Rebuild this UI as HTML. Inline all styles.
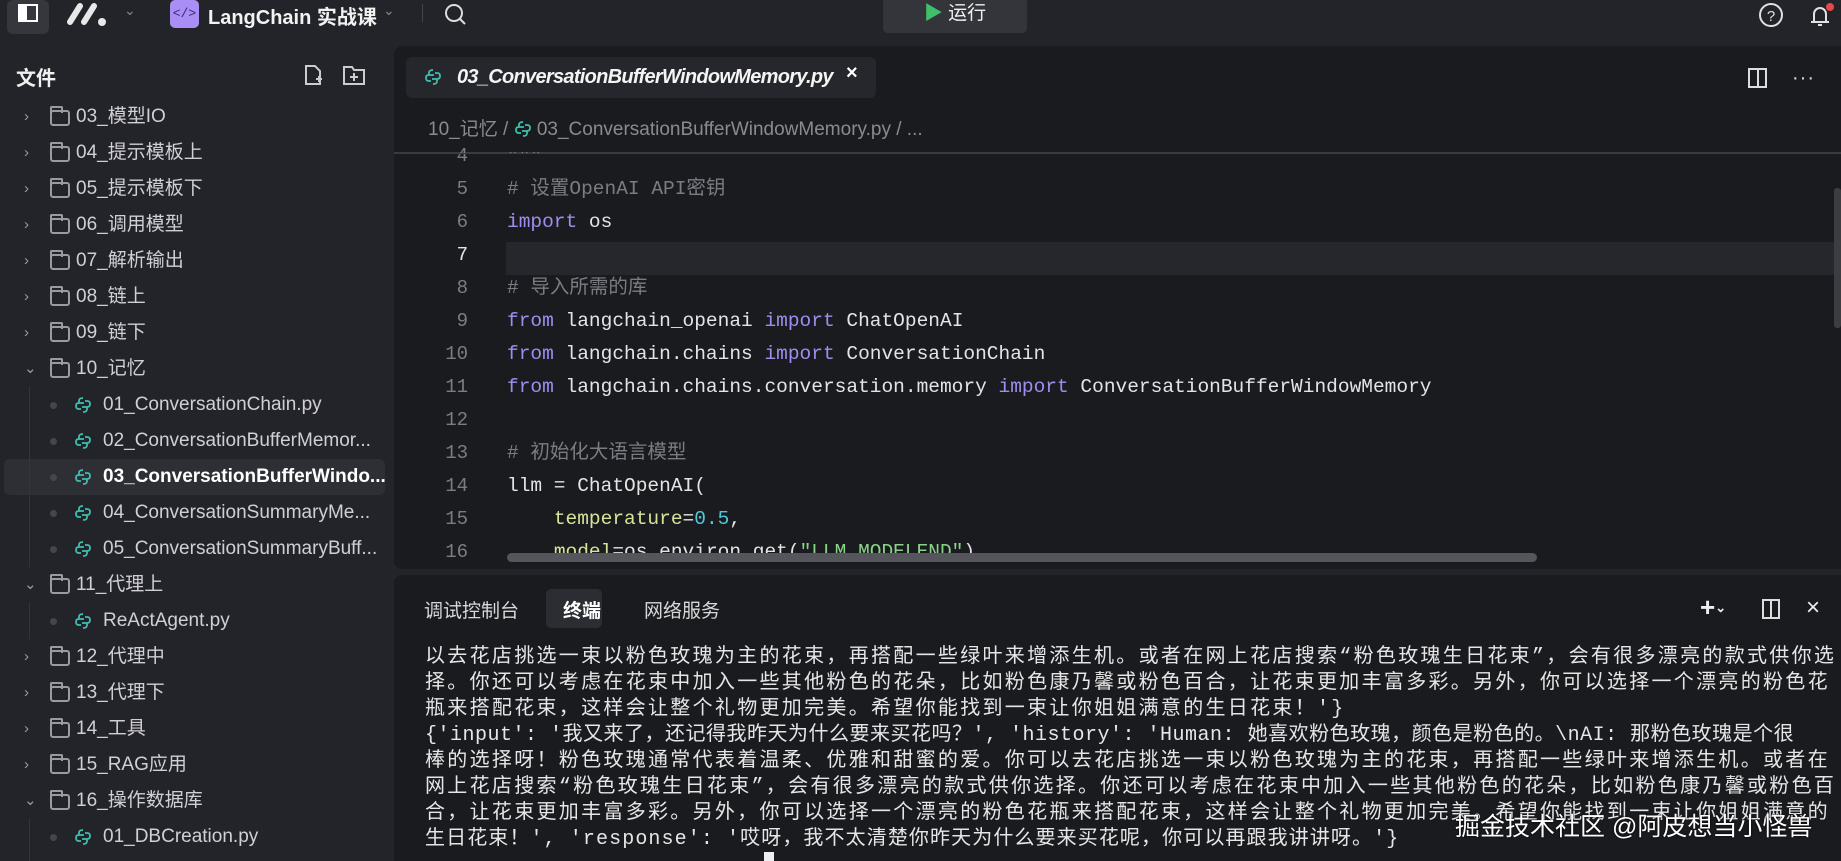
<!DOCTYPE html>
<html><head><meta charset="utf-8"><style>
*{margin:0;padding:0;box-sizing:border-box}
body{width:1841px;height:861px;overflow:hidden;background:#232429;font-family:"Liberation Sans","Noto Sans CJK SC",sans-serif;color:#d4d4d8;position:relative}
.abs{position:absolute}
.mono{font-family:"Liberation Mono","Noto Sans CJK SC",monospace}
.row{position:absolute;left:0;height:36px;line-height:36px;font-size:19px;color:#d0d0d4;white-space:nowrap}
.chev{position:absolute;left:24px;top:0;color:#9a9aa0;font-size:15px}
.fold{position:absolute;left:50px;top:11px;width:20px;height:16px;border:2px solid #9a9aa0;border-radius:3px}
.fold:before{content:"";position:absolute;left:-2px;top:-6px;width:9px;height:5px;border:2px solid #9a9aa0;border-bottom:none;border-radius:2px 2px 0 0}
.dot{position:absolute;left:50px;top:15px;width:7px;height:7px;border-radius:50%;background:#45464c}
.py{position:absolute;left:74px;top:9px;width:18px;height:18px}
.code{position:absolute;left:507px;font-size:19.5px;white-space:pre;color:#e4e4e4;height:33px;line-height:33px}
.ln{position:absolute;left:430px;width:38px;text-align:right;font-size:19px;color:#7c7d83;line-height:33px;font-family:"Liberation Mono",monospace}
.k{color:#a08cf0}.c{color:#7b7c82}.g{color:#d8e39a}.n{color:#4fc9d6}.s{color:#8ad28a}
.t{position:absolute;left:425px;font-size:20px;letter-spacing:2.3px;white-space:nowrap;color:#e6e6e6;line-height:30.5px;font-family:"Liberation Mono","Noto Sans CJK SC",monospace}
</style></head><body>
<div class="abs" style="left:7px;top:0;width:42px;height:34px;background:#36373d;border-radius:6px"></div>
<div class="abs" style="left:18px;top:4px;width:20px;height:18px;border:2px solid #fff;background:linear-gradient(90deg,#fff 45%,transparent 45%)"></div>
<svg class="abs" style="left:66px;top:2px" width="44" height="24"><g stroke="#e8e8e8" stroke-width="6" stroke-linecap="round"><line x1="4" y1="20" x2="14" y2="4"/><line x1="18" y1="20" x2="28" y2="4"/></g><circle cx="36" cy="20" r="4" fill="#e8e8e8"/></svg>
<div class="abs" style="left:124px;top:2px;color:#888;font-size:14px">⌄</div>
<div class="abs mono" style="left:170px;top:0;width:29px;height:28px;background:#a88ef5;border-radius:5px;color:#3a2a70;font-size:13px;text-align:center;line-height:28px">&lt;/&gt;</div>
<div class="abs" style="left:208px;top:1px;font-size:20px;font-weight:bold;color:#f2f2f2">LangChain 实战课</div>
<div class="abs" style="left:383px;top:2px;color:#888;font-size:14px">⌄</div>
<div class="abs" style="left:422px;top:4px;width:1px;height:18px;background:#44454a"></div>
<svg class="abs" style="left:444px;top:3px" width="24" height="24"><circle cx="10" cy="10" r="8" stroke="#ddd" stroke-width="2" fill="none"/><line x1="16" y1="16" x2="21" y2="21" stroke="#ddd" stroke-width="2"/></svg>
<div class="abs" style="left:883px;top:0;width:144px;height:33px;background:#34353b;border-radius:0 0 5px 5px;color:#f0f0f0;font-size:19px;line-height:28px;text-align:center"><span style="color:#3fbf6a">▶</span> 运行</div>
<svg class="abs" style="left:1758px;top:2px" width="26" height="26"><circle cx="13" cy="13" r="11" stroke="#e0e0e0" stroke-width="2" fill="none"/><text x="13" y="19" font-size="15" fill="#e0e0e0" text-anchor="middle" font-family="Liberation Sans">?</text></svg>
<svg class="abs" style="left:1806px;top:2px" width="30" height="26"><path d="M5 20h18M8 20v-8a6 6 0 0 1 12 0v8M12 23h4" stroke="#e0e0e0" stroke-width="2" fill="none"/><circle cx="24" cy="5" r="4" fill="#e5484d"/></svg>

<div class="abs" style="left:16px;top:62px;font-size:20px;font-weight:bold;color:#f0f0f0">文件</div>
<svg class="abs" style="left:302px;top:64px" width="22" height="22"><path d="M4 2h9l5 5v13H4z" stroke="#ccc" stroke-width="2" fill="none"/><path d="M14 15h6M17 12v6" stroke="#ccc" stroke-width="2"/></svg>
<svg class="abs" style="left:342px;top:64px" width="24" height="22"><path d="M2 3h8l2 3h10v14H2z" stroke="#ccc" stroke-width="2" fill="none"/><path d="M8 13h8M12 9v8" stroke="#ccc" stroke-width="2"/></svg>
<div class="abs" style="left:4px;top:459px;width:381px;height:36px;background:#2e2f35;border-radius:6px"></div>

<div class="row" style="top:99px"><span class="chev">›</span><span class="fold"></span><span style="position:absolute;left:76px">03_模型IO</span></div>
<div class="row" style="top:135px"><span class="chev">›</span><span class="fold"></span><span style="position:absolute;left:76px">04_提示模板上</span></div>
<div class="row" style="top:171px"><span class="chev">›</span><span class="fold"></span><span style="position:absolute;left:76px">05_提示模板下</span></div>
<div class="row" style="top:207px"><span class="chev">›</span><span class="fold"></span><span style="position:absolute;left:76px">06_调用模型</span></div>
<div class="row" style="top:243px"><span class="chev">›</span><span class="fold"></span><span style="position:absolute;left:76px">07_解析输出</span></div>
<div class="row" style="top:279px"><span class="chev">›</span><span class="fold"></span><span style="position:absolute;left:76px">08_链上</span></div>
<div class="row" style="top:315px"><span class="chev">›</span><span class="fold"></span><span style="position:absolute;left:76px">09_链下</span></div>
<div class="row" style="top:351px"><span class="chev">⌄</span><span class="fold"></span><span style="position:absolute;left:76px">10_记忆</span></div>
<div class="abs" style="left:29px;top:387px;width:1px;height:180px;background:#34353a"></div>
<div class="abs" style="left:29px;top:603px;width:1px;height:36px;background:#34353a"></div>
<div class="abs" style="left:29px;top:819px;width:1px;height:42px;background:#34353a"></div>

<svg width="0" height="0" style="position:absolute"><defs><g id="pyi"><path d="M9 2c-4 0-4 2-4 3v2h5M9 16c4 0 4-2 4-3v-2H8M5 7C2 7 2 9 2 10s0 3 3 3h2M13 11c3 0 3-2 3-3s0-3-3-3h-2" stroke="#3fbfb0" stroke-width="1.8" fill="none"/></g></defs></svg>
<div class="row" style="top:387px"><span class="dot"></span><svg class="py"><use href="#pyi"/></svg><span style="position:absolute;left:103px">01_ConversationChain.py</span></div>
<div class="row" style="top:423px"><span class="dot"></span><svg class="py"><use href="#pyi"/></svg><span style="position:absolute;left:103px">02_ConversationBufferMemor...</span></div>
<div class="row" style="top:459px"><span class="dot"></span><svg class="py"><use href="#pyi"/></svg><span style="position:absolute;left:103px;color:#fff;font-weight:bold">03_ConversationBufferWindo...</span></div>
<div class="row" style="top:495px"><span class="dot"></span><svg class="py"><use href="#pyi"/></svg><span style="position:absolute;left:103px">04_ConversationSummaryMe...</span></div>
<div class="row" style="top:531px"><span class="dot"></span><svg class="py"><use href="#pyi"/></svg><span style="position:absolute;left:103px">05_ConversationSummaryBuff...</span></div>
<div class="row" style="top:567px"><span class="chev">⌄</span><span class="fold"></span><span style="position:absolute;left:76px">11_代理上</span></div>
<div class="row" style="top:603px"><span class="dot"></span><svg class="py"><use href="#pyi"/></svg><span style="position:absolute;left:103px">ReActAgent.py</span></div>
<div class="row" style="top:639px"><span class="chev">›</span><span class="fold"></span><span style="position:absolute;left:76px">12_代理中</span></div>
<div class="row" style="top:675px"><span class="chev">›</span><span class="fold"></span><span style="position:absolute;left:76px">13_代理下</span></div>
<div class="row" style="top:711px"><span class="chev">›</span><span class="fold"></span><span style="position:absolute;left:76px">14_工具</span></div>
<div class="row" style="top:747px"><span class="chev">›</span><span class="fold"></span><span style="position:absolute;left:76px">15_RAG应用</span></div>
<div class="row" style="top:783px"><span class="chev">⌄</span><span class="fold"></span><span style="position:absolute;left:76px">16_操作数据库</span></div>
<div class="row" style="top:819px"><span class="dot"></span><svg class="py"><use href="#pyi"/></svg><span style="position:absolute;left:103px">01_DBCreation.py</span></div>

<div class="abs" style="left:394px;top:46px;width:1447px;height:523px;background:#1a1b1f;border-radius:8px 0 0 8px;overflow:hidden">
  <div class="abs" style="left:12px;top:11px;width:470px;height:41px;background:#26272c;border-radius:6px"></div>
  <svg class="abs" style="left:30px;top:22px" width="20" height="20"><use href="#pyi"/></svg>
  <div class="abs" style="left:63px;top:20px;font-size:20px;font-style:italic;font-weight:bold;color:#f4f4f4;letter-spacing:-0.7px">03_ConversationBufferWindowMemory.py</div>
  <div class="abs" style="left:452px;top:16px;font-size:20px;color:#fff;font-weight:bold">×</div>
  <div class="abs" style="left:1354px;top:22px;width:19px;height:20px;border:2px solid #ddd"></div><div class="abs" style="left:1363px;top:22px;width:2px;height:20px;background:#ddd"></div>
  <div class="abs" style="left:1398px;top:22px;font-size:20px;color:#ddd;letter-spacing:1px;line-height:20px">···</div>
  <div class="abs" style="left:34px;top:68px;font-size:19px;color:#8a8b90;white-space:nowrap">10_记忆 / <svg width="18" height="18" style="vertical-align:-3px"><use href="#pyi"/></svg> 03_ConversationBufferWindowMemory.py / ...</div>
  <div class="abs" style="left:0;top:106px;width:1447px;height:1px;background:#3a3b40"></div>
  <div class="abs" style="left:112px;top:196px;width:1330px;height:33px;background:#25272d"></div>
  <div class="abs" style="left:1440px;top:142px;width:7px;height:140px;background:#3c3d42;border-radius:3px"></div>
</div>
<div class="ln" style="top:140px">4</div>
<div class="ln" style="top:173px">5</div><div class="ln" style="top:206px">6</div><div class="ln" style="top:239px;color:#e6e6e6">7</div>
<div class="ln" style="top:272px">8</div><div class="ln" style="top:305px">9</div><div class="ln" style="top:338px">10</div>
<div class="ln" style="top:371px">11</div><div class="ln" style="top:404px">12</div><div class="ln" style="top:437px">13</div>
<div class="ln" style="top:470px">14</div><div class="ln" style="top:503px">15</div><div class="ln" style="top:536px">16</div>
<div class="abs" style="left:394px;top:153px;width:1447px;height:1px;background:#3a3b40"></div>
<div class="code mono c" style="top:140px;clip-path:inset(12px 0 0 0)">"""</div>
<div class="code mono c" style="top:173px"># 设置OpenAI API密钥</div>
<div class="code mono" style="top:206px"><span class="k">import</span> os</div>
<div class="code mono c" style="top:272px"># 导入所需的库</div>
<div class="code mono" style="top:305px"><span class="k">from</span> langchain_openai <span class="k">import</span> ChatOpenAI</div>
<div class="code mono" style="top:338px"><span class="k">from</span> langchain.chains <span class="k">import</span> ConversationChain</div>
<div class="code mono" style="top:371px"><span class="k">from</span> langchain.chains.conversation.memory <span class="k">import</span> ConversationBufferWindowMemory</div>
<div class="code mono c" style="top:437px"># 初始化大语言模型</div>
<div class="code mono" style="top:470px">llm = ChatOpenAI(</div>
<div class="code mono" style="top:503px">    <span class="g">temperature</span>=<span class="n">0.5</span>,</div>
<div class="code mono" style="top:536px;height:22px;overflow:hidden">    <span class="g">model</span>=os.environ.get(<span class="s">"LLM_MODELEND"</span>),</div>
<div class="abs" style="left:507px;top:553px;width:1030px;height:9px;background:#55565b;border-radius:5px"></div>

<div class="abs" style="left:394px;top:575px;width:1447px;height:286px;background:#1a1b1f;border-radius:8px 0 0 0"></div>
<div class="abs" style="left:424px;top:596px;font-size:19px;color:#d8d8d8">调试控制台</div>
<div class="abs" style="left:546px;top:589px;width:56px;height:39px;background:#2c2d33;border-radius:5px"></div>
<div class="abs" style="left:563px;top:596px;font-size:19px;color:#fff;font-weight:bold">终端</div>
<div class="abs" style="left:644px;top:596px;font-size:19px;color:#d8d8d8">网络服务</div>
<div class="abs" style="left:1700px;top:592px;font-size:26px;color:#eee;font-weight:bold">+<span style="font-size:13px;vertical-align:4px">⌄</span></div>
<div class="abs" style="left:1762px;top:599px;width:18px;height:20px;border:2px solid #ddd"></div><div class="abs" style="left:1770px;top:599px;width:2px;height:20px;background:#ddd"></div>
<div class="abs" style="left:1806px;top:594px;font-size:24px;color:#eee">×</div>
<div class="t" style="top:643px">以去花店挑选一束以粉色玫瑰为主的花束，再搭配一些绿叶来增添生机。或者在网上花店搜索“粉色玫瑰生日花束”，会有很多漂亮的款式供你选</div>
<div class="t" style="top:669px">择。你还可以考虑在花束中加入一些其他粉色的花朵，比如粉色康乃馨或粉色百合，让花束更加丰富多彩。另外，你可以选择一个漂亮的粉色花</div>
<div class="t" style="top:695px">瓶来搭配花束，这样会让整个礼物更加完美。希望你能找到一束让你姐姐满意的生日花束！'}</div>
<div class="t" style="top:721px;letter-spacing:0.5px">{'input': '我又来了，还记得我昨天为什么要来买花吗？', 'history': 'Human: 她喜欢粉色玫瑰，颜色是粉色的。\nAI: 那粉色玫瑰是个很</div>
<div class="t" style="top:747px">棒的选择呀！粉色玫瑰通常代表着温柔、优雅和甜蜜的爱。你可以去花店挑选一束以粉色玫瑰为主的花束，再搭配一些绿叶来增添生机。或者在</div>
<div class="t" style="top:773px">网上花店搜索“粉色玫瑰生日花束”，会有很多漂亮的款式供你选择。你还可以考虑在花束中加入一些其他粉色的花朵，比如粉色康乃馨或粉色百</div>
<div class="t" style="top:799px">合，让花束更加丰富多彩。另外，你可以选择一个漂亮的粉色花瓶来搭配花束，这样会让整个礼物更加完美。希望你能找到一束让你姐姐满意的</div>
<div class="t" style="top:825px;letter-spacing:1.1px">生日花束！', 'response': '哎呀，我不太清楚你昨天为什么要来买花呢，你可以再跟我讲讲呀。'}</div>
<div class="abs" style="left:764px;top:852px;width:10px;height:9px;background:#eee"></div>
<div class="abs" style="left:1455px;top:807px;font-size:25px;color:#fff;text-shadow:0 0 2px #000;white-space:nowrap">掘金技术社区 @阿皮想当小怪兽</div>
</body></html>
